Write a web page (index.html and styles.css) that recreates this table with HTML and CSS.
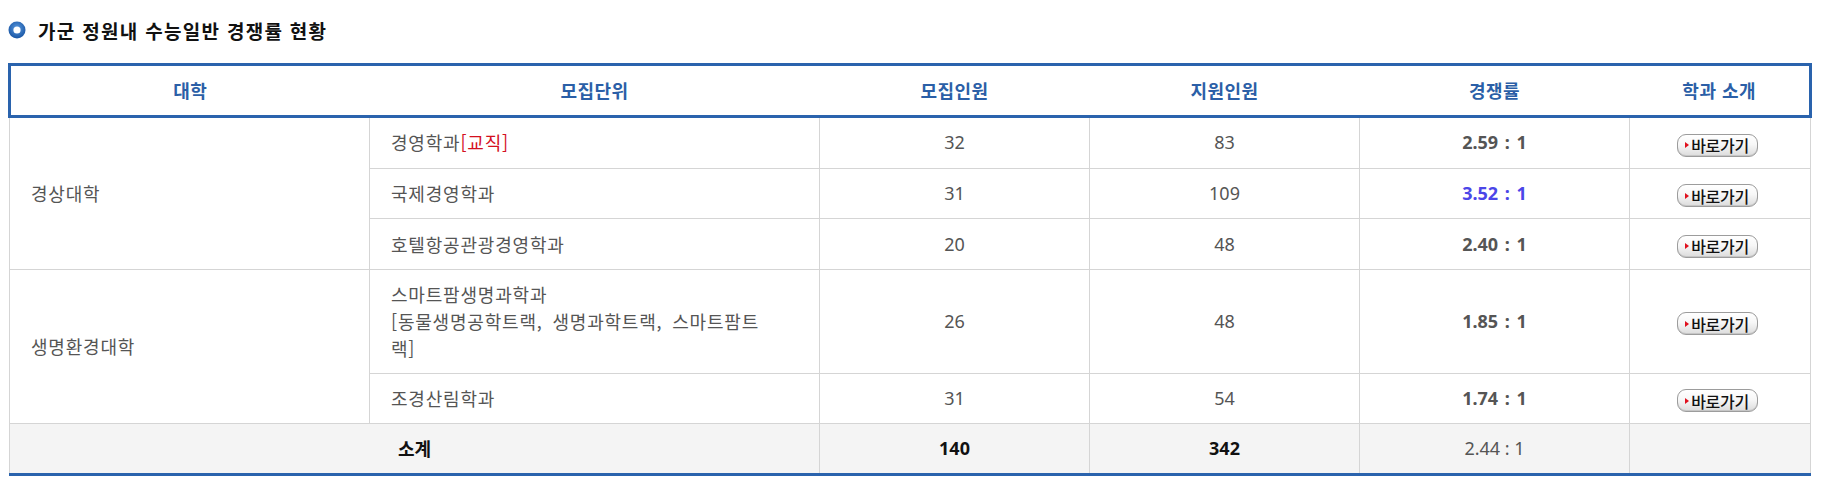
FILE: index.html
```html
<!DOCTYPE html>
<html lang="ko">
<head>
<meta charset="utf-8">
<title>가군 정원내 수능일반 경쟁률 현황</title>
<link rel="stylesheet" href="styles.css">
</head>
<body>
<h3 class="title">
  <svg class="bullet" width="18" height="18" viewBox="0 0 18 18" aria-hidden="true">
    <defs>
      <radialGradient id="rg" cx="50%" cy="40%" r="55%">
        <stop offset="0" stop-color="#5a9ae0"/>
        <stop offset="1" stop-color="#1d5aa8"/>
      </radialGradient>
    </defs>
    <circle cx="9" cy="9" r="8.5" fill="url(#rg)"/>
    <circle cx="9" cy="9" r="3.6" fill="#fff"/>
  </svg>
  <span>가군 정원내 수능일반 경쟁률 현황</span>
</h3>
<table class="rate">
  <colgroup>
    <col class="c1"><col class="c2"><col class="c3"><col class="c4"><col class="c5"><col class="c6">
  </colgroup>
  <thead>
    <tr>
      <th class="first">대학</th>
      <th>모집단위</th>
      <th>모집인원</th>
      <th>지원인원</th>
      <th>경쟁률</th>
      <th class="last">학과 소개</th>
    </tr>
  </thead>
  <tbody>
    <tr>
      <td class="univ" rowspan="3">경상대학</td>
      <td class="dept">경영학과<span class="red">[교직]</span></td>
      <td class="num">32</td>
      <td class="num">83</td>
      <td class="num ratio">2.59 : 1</td>
      <td><a class="go" href="#"><i class="tri"></i>바로가기</a></td>
    </tr>
    <tr>
      <td class="dept">국제경영학과</td>
      <td class="num">31</td>
      <td class="num">109</td>
      <td class="num ratio hi">3.52 : 1</td>
      <td><a class="go" href="#"><i class="tri"></i>바로가기</a></td>
    </tr>
    <tr>
      <td class="dept">호텔항공관광경영학과</td>
      <td class="num">20</td>
      <td class="num">48</td>
      <td class="num ratio">2.40 : 1</td>
      <td><a class="go" href="#"><i class="tri"></i>바로가기</a></td>
    </tr>
    <tr>
      <td class="univ" rowspan="2">생명환경대학</td>
      <td class="dept">스마트팜생명과학과<br>[동물생명공학트랙, 생명과학트랙, 스마트팜트랙]</td>
      <td class="num">26</td>
      <td class="num">48</td>
      <td class="num ratio">1.85 : 1</td>
      <td><a class="go" href="#"><i class="tri"></i>바로가기</a></td>
    </tr>
    <tr>
      <td class="dept">조경산림학과</td>
      <td class="num">31</td>
      <td class="num">54</td>
      <td class="num ratio">1.74 : 1</td>
      <td><a class="go" href="#"><i class="tri"></i>바로가기</a></td>
    </tr>
  </tbody>
  <tfoot>
    <tr>
      <td class="sum" colspan="2">소계</td>
      <td class="num sum">140</td>
      <td class="num sum">342</td>
      <td class="num">2.44 : 1</td>
      <td></td>
    </tr>
  </tfoot>
</table>
</body>
</html>
```
FILE: styles.css
```css
html, body {
  background: #fff;
}
body {
  margin: 8px;
  font-family: "Noto Sans CJK KR", "Noto Sans", sans-serif;
  color: #555;
}
.title {
  display: flex;
  align-items: center;
  gap: 12px;
  margin: 0;
  height: 44px;
  font-size: 19px;
  font-weight: 700;
  color: #111;
  letter-spacing: 1.3px;
}
.bullet {
  display: block;
  flex: none;
}
.rate {
  margin-top: 11px;
  border-collapse: collapse;
  table-layout: fixed;
  width: 1801px;
  font-size: 18px;
  line-height: 27px;
}
.c1 { width: 360px; }
.c2 { width: 450px; }
.c3, .c4, .c5 { width: 270px; }
.c6 { width: 181px; }
.rate th {
  height: 49px;
  padding: 0;
  font-size: 18px;
  font-weight: 700;
  color: #2b5fa7;
  letter-spacing: 0.5px;
  border-top: 3px solid #2a63ad;
  border-bottom: 3px solid #2a63ad;
}
.rate th.first { border-left: 3px solid #2a63ad; }
.rate th.last { border-right: 3px solid #2a63ad; }
.rate td {
  padding: 11px 10px;
  text-align: center;
  vertical-align: middle;
  border: 1px solid #d5d5d5;
}
.rate td.univ,
.rate td.dept {
  text-align: left;
  padding-left: 21px;
  padding-right: 26px;
  letter-spacing: 0.8px;
}
.rate td.dept {
  padding-right: 42px;
  word-spacing: 4px;
}
.rate td.num {
  font-family: "Noto Sans", "Noto Sans CJK KR", sans-serif;
  font-size: 18px;
}
.red { color: #d4101e; }
.ratio {
  font-weight: 700;
  color: #555;
  word-spacing: 2px;
}
.ratio.hi { color: #4b46e8; }
.rate tfoot td {
  background: #f4f4f4;
  border-bottom: 3px solid #2a63ad;
}
.rate td.sum {
  font-weight: 700;
  color: #111;
}
.go {
  display: inline-flex;
  align-items: center;
  justify-content: center;
  gap: 2px;
  box-sizing: border-box;
  width: 81px;
  height: 23px;
  margin-right: 6px;
  vertical-align: middle;
  border: 1px solid #9c9c9c;
  border-radius: 9px;
  background: linear-gradient(#ffffff 0%, #f7f7f7 45%, #dcdcdc 100%);
  box-shadow: inset 0 -1px 0 #c6c6c6;
  color: #111;
  font-size: 16px;
  line-height: 1;
  font-weight: 500;
  letter-spacing: -0.3px;
  text-decoration: none;
}
.tri {
  width: 0;
  height: 0;
  border-top: 3px solid transparent;
  border-bottom: 3px solid transparent;
  border-left: 4px solid #e0101e;
}
```
